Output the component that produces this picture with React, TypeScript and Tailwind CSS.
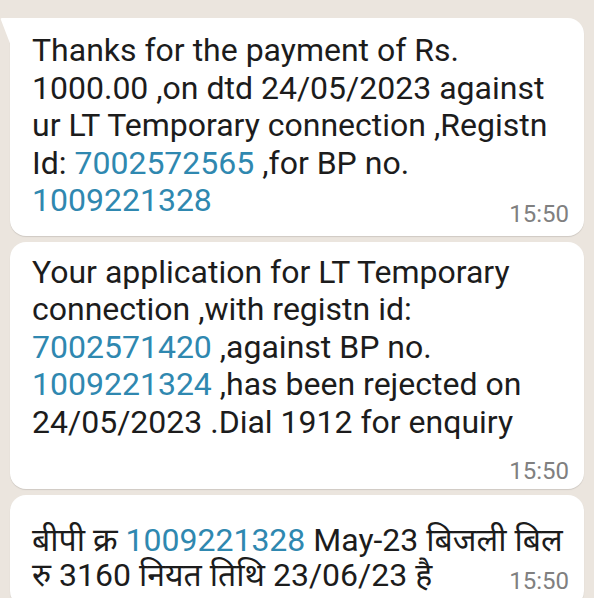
import React from 'react';

const Link: React.FC<{ children: React.ReactNode }> = ({ children }) => (
  <span className="text-[#2f88b0]">{children}</span>
);

const Time: React.FC<{ className?: string }> = ({ className = '' }) => (
  <span className={`text-[24px] leading-[24px] text-[#808080] ${className}`}>15:50</span>
);

const App: React.FC = () => {
  return (
    <div
      className="w-[594px] h-[598px] overflow-hidden bg-[#ebe5de] text-[#1c1c1c] pt-[18px] flex flex-col gap-[6px]"
      style={{ fontFamily: 'Roboto, "Noto Sans", "Noto Sans Devanagari", sans-serif' }}
    >
      {/* first message, with tail */}
      <div className="relative mx-[10px] bg-white rounded-[16px] rounded-tl-none shadow-[0_1px_1px_rgba(0,0,0,0.12)] pl-[22px] pr-[15px] pt-[14px] pb-[16px] text-[32px] leading-[37.5px]">
        <svg className="absolute -left-[10px] top-0" width="11" height="28" viewBox="0 0 11 28">
          <path d="M11 0 H2 Q0 0 1 2 L11 28 Z" fill="#ffffff" />
        </svg>
        <div>Thanks for the payment of Rs.</div>
        <div>1000.00 ,on dtd 24/05/2023 against</div>
        <div>ur LT Temporary connection ,Registn</div>
        <div>
          Id: <Link>7002572565</Link> ,for BP no.
        </div>
        <div className="flex items-end">
          <Link>1009221328</Link>
          <Time className="ml-auto translate-y-[6px]" />
        </div>
      </div>

      <div className="mx-[10px] bg-white rounded-[16px] shadow-[0_1px_1px_rgba(0,0,0,0.12)] pl-[22px] pr-[15px] pt-[12px] pb-[6px] text-[32px] leading-[37.5px]">
        <div>Your application for LT Temporary</div>
        <div>connection ,with registn id:</div>
        <div>
          <Link>7002571420</Link> ,against BP no.
        </div>
        <div>
          <Link>1009221324</Link> ,has been rejected on
        </div>
        <div>24/05/2023 .Dial 1912 for enquiry</div>
        <div className="flex justify-end mt-[18px]">
          <Time />
        </div>
      </div>

      <div className="mx-[10px] bg-white rounded-[16px] shadow-[0_1px_1px_rgba(0,0,0,0.12)] pl-[22px] pr-[15px] pt-[28px] pb-[14px] text-[32px] leading-[35px]">
        <div>
          बीपी क्र <Link>1009221328</Link> May-23 बिजली बिल
        </div>
        <div className="flex items-end">
          <span>रु 3160 नियत तिथि 23/06/23 है</span>
          <Time className="ml-auto" />
        </div>
      </div>
    </div>
  );
};

export default App;
